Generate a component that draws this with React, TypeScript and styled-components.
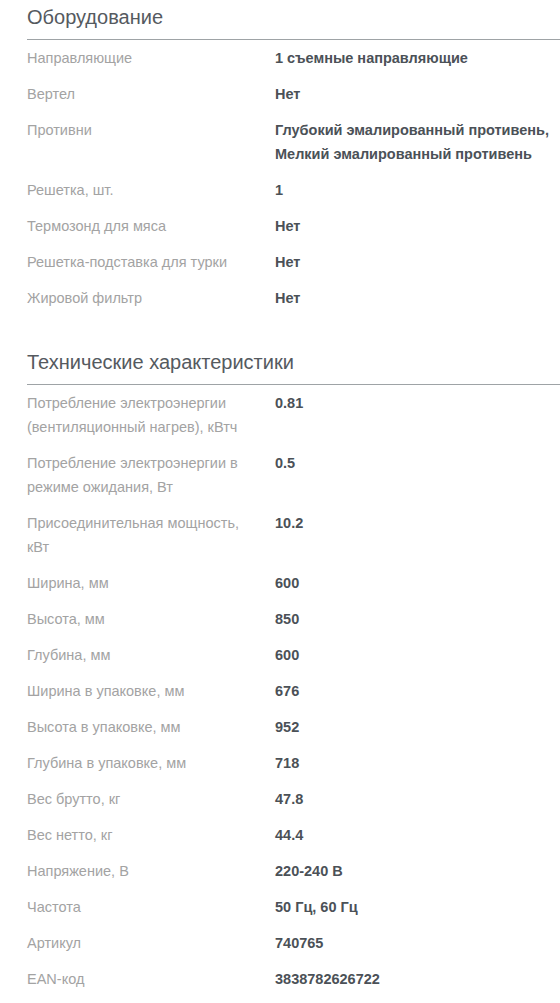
import styled, { createGlobalStyle } from "styled-components";

const GlobalStyle = createGlobalStyle`
    body {
        margin: 0;
        background: #ffffff;
        font-family: Arial, "Liberation Sans", sans-serif;
    }
`;

const Page = styled.div`
    display: flex;
    flex-direction: column;
    gap: 29px;
    padding-left: 27px;
`;

const Section = styled.section`
    display: flex;
    flex-direction: column;
`;

const Title = styled.h2`
    margin: 0;
    padding-bottom: 5px;
    font-size: 20px;
    line-height: 34px;
    font-weight: normal;
    color: #555a5f;
    border-bottom: 1px solid #9ea3a6;
`;

const Row = styled.div`
    display: grid;
    grid-template-columns: 248px 1fr;
    padding: 6px 0;
    font-size: 14.5px;
    line-height: 24px;
`;

const Label = styled.div`
    padding-right: 16px;
    color: #a3a3a3;
`;

const Value = styled.div`
    font-weight: bold;
    color: #4b5157;
`;

interface SpecGroup {
    title: string;
    rows: [string, string][];
}

const groups: SpecGroup[] = [
    {
        title: "Оборудование",
        rows: [
            ["Направляющие", "1 съемные направляющие"],
            ["Вертел", "Нет"],
            ["Противни", "Глубокий эмалированный противень, Мелкий эмалированный противень"],
            ["Решетка, шт.", "1"],
            ["Термозонд для мяса", "Нет"],
            ["Решетка-подставка для турки", "Нет"],
            ["Жировой фильтр", "Нет"],
        ],
    },
    {
        title: "Технические характеристики",
        rows: [
            ["Потребление электроэнергии (вентиляционный нагрев), кВтч", "0.81"],
            ["Потребление электроэнергии в режиме ожидания, Вт", "0.5"],
            ["Присоединительная мощность, кВт", "10.2"],
            ["Ширина, мм", "600"],
            ["Высота, мм", "850"],
            ["Глубина, мм", "600"],
            ["Ширина в упаковке, мм", "676"],
            ["Высота в упаковке, мм", "952"],
            ["Глубина в упаковке, мм", "718"],
            ["Вес брутто, кг", "47.8"],
            ["Вес нетто, кг", "44.4"],
            ["Напряжение, В", "220-240 В"],
            ["Частота", "50 Гц, 60 Гц"],
            ["Артикул", "740765"],
            ["EAN-код", "3838782626722"],
        ],
    },
];

function App() {
    return (
        <>
            <GlobalStyle />
            <Page>
                {groups.map((group) => (
                    <Section key={group.title}>
                        <Title>{group.title}</Title>
                        {group.rows.map(([label, value]) => (
                            <Row key={label}>
                                <Label>{label}</Label>
                                <Value>{value}</Value>
                            </Row>
                        ))}
                    </Section>
                ))}
            </Page>
        </>
    );
}

export default App;
